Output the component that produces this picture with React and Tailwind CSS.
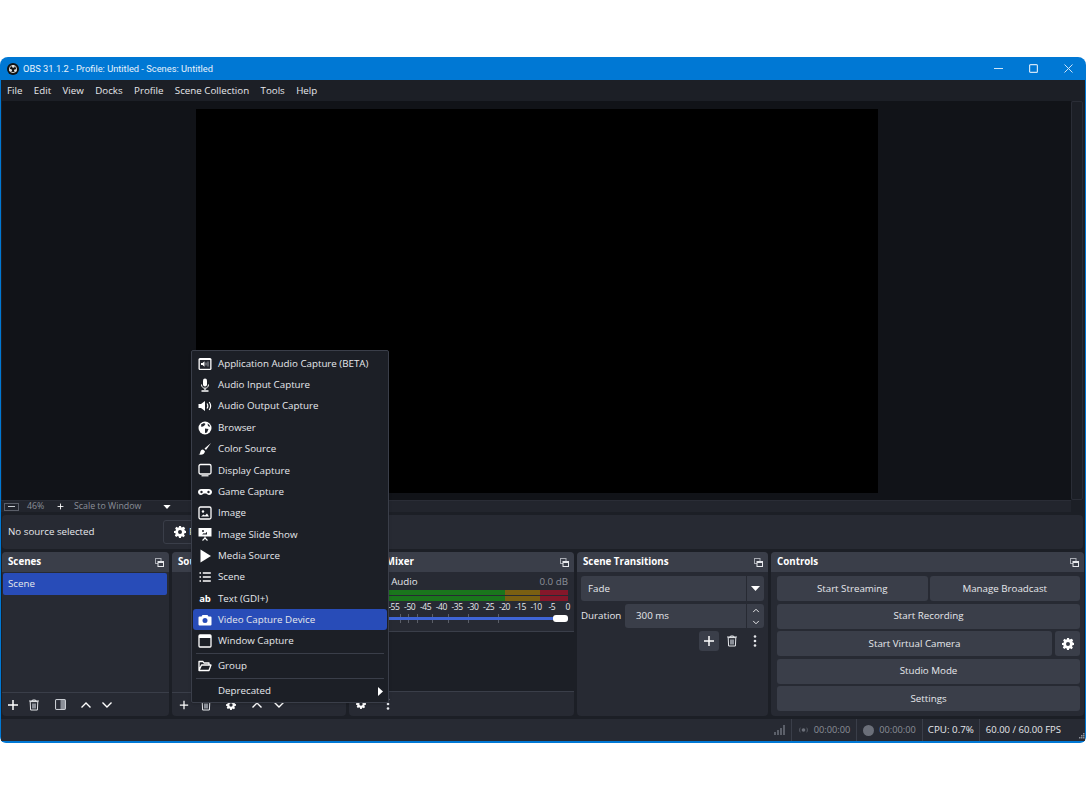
const Plus = ({ className = 'w-3 h-3' }) => (
  <svg viewBox="0 0 12 12" className={`shrink-0 ${className}`}>
    <path d="M6 1v10M1 6h10" stroke="#fff" strokeWidth="1.5" fill="none" />
  </svg>
);

const Trash = () => (
  <svg viewBox="0 0 12 12" className="w-3 h-3 shrink-0">
    <path d="M1 2h10M4 2l.5-1h3L8 2M2.200 2.600l.4 8.400h6.800l.4-8.400z" stroke="#e5e7eb" strokeWidth="1" fill="none" />
    <rect x="4" y="4.500" width="4" height="5" fill="#8b8f98" />
  </svg>
);

const Gear = ({ className = 'w-3 h-3' }) => (
  <svg viewBox="0 0 12 12" className={`shrink-0 ${className}`}>
    <path
      fillRule="evenodd"
      fill="#fff"
      d="M5 0h2l.3 1.600 1-.4L9.700 .8l1.500 1.500-.9 1.300.5 1 1.200.4v2l-1.600.3-.4 1 .9 1.400-1.500 1.500-1.300-.9-1 .5L7 12H5l-.3-1.600-1-.4-1.400.9L.8 9.400l.9-1.300-.5-1L0 7V5l1.600-.3.4-1-.9-1.400L2.600 .8l1.300 .9 1-.5zM6 4a2 2 0 1 0 0 4 2 2 0 0 0 0-4z"
    />
  </svg>
);

const Dots = () => (
  <svg viewBox="0 0 4 12" className="w-1 h-3 shrink-0" fill="#e5e7eb">
    <circle cx="2" cy="1.500" r="1.300" />
    <circle cx="2" cy="6" r="1.300" />
    <circle cx="2" cy="10.500" r="1.300" />
  </svg>
);

const Chevron = ({ up, className = 'w-3 h-2' }) => (
  <svg viewBox="0 0 12 8" className={`shrink-0 ${className}`}>
    <path d={up ? 'M1.500 6.500L6 2l4.500 4.500' : 'M1.500 1.500L6 6l4.500-4.500'} stroke="#fff" strokeWidth="1.400" fill="none" />
  </svg>
);

const Float = () => (
  <svg viewBox="0 0 9 9" className="w-[9px] h-[9px]">
    <rect x=".5" y=".5" width="5.500" height="5" fill="none" stroke="#a8abb3" />
    <rect x="3" y="3.500" width="5.500" height="5" fill="#3a3e49" stroke="#e5e7eb" />
    <rect x="3" y="3.500" width="5.500" height="1.500" fill="#e5e7eb" />
  </svg>
);

const Caret = ({ className = 'w-[9px] h-[5px]' }) => (
  <svg viewBox="0 0 9 5" className={className}>
    <path d="M0 0h9L4.500 5z" fill="#fff" />
  </svg>
);

const iconPaths = {
  appAudio: (
    <>
      <rect x=".5" y="1" width="13" height="12" rx="1.500" fill="#fff" />
      <rect x="1.800" y="3" width="10.400" height="8.800" fill="#22252d" />
      <path d="M3 6h1.500l2-1.700v5.400l-2-1.700H3z" fill="#fff" />
      <path d="M8 5.500v3M10 4.500v5" stroke="#9ca0a8" strokeWidth="1" />
    </>
  ),
  mic: (
    <>
      <rect x="5" y=".5" width="4" height="8" rx="2" fill="#fff" />
      <path d="M3.500 6.500c0 5 7 5 7 0" stroke="#fff" fill="none" />
      <path d="M7 10.500V12M3.500 13h7" stroke="#fff" strokeWidth="1.300" />
    </>
  ),
  speaker: (
    <>
      <path d="M.5 5h2.500L7 2v10L3 9H.5z" fill="#fff" />
      <path d="M9 4.500c1 1.500 1 3.500 0 5M11.200 3c1.800 2.500 1.800 5.500 0 8" stroke="#fff" strokeWidth="1.200" fill="none" />
    </>
  ),
  globe: (
    <>
      <circle cx="7" cy="7" r="6.500" fill="#fff" />
      <path d="M3 3.500l3-1.500 1.500 1-1.500 2-2.500 1zM7 7.500l3.500.5-1.500 3.500-2 .5zM9.500 2.500l2 1.500.5 2-2-1z" fill="#22252d" />
    </>
  ),
  brush: (
    <>
      <path d="M13 1L6.500 6.500l1.500 1.500z" fill="#fff" />
      <path d="M5 7.500c-2 0-2.500 1.500-2.800 3-.1 1-.7 1.500-1.700 1.800 2.500 1 6 .5 6.500-3z" fill="#fff" />
    </>
  ),
  monitor: (
    <>
      <rect x="1" y="1.500" width="12" height="9.500" rx="1.500" fill="none" stroke="#fff" strokeWidth="1.300" />
      <path d="M3.500 12.800h7" stroke="#fff" strokeWidth="1.200" />
    </>
  ),
  gamepad: (
    <path
      fillRule="evenodd"
      fill="#fff"
      d="M3.500 4h7C13 4 14 5.500 14 7s-1 3-3 3c-1.500 0-2-1.500-3-1.500H6C5 8.500 4.500 10 3 10 1 10 0 8.500 0 7s1-3 3.500-3zM3.500 5.800a1.200 1.200 0 1 0 0 2.400 1.200 1.200 0 0 0 0-2.400zM10.500 5.800a1.200 1.200 0 1 0 0 2.400 1.200 1.200 0 0 0 0-2.400z"
    />
  ),
  image: (
    <>
      <rect x="1" y="1" width="12" height="12" rx="1.500" fill="none" stroke="#fff" strokeWidth="1.300" />
      <circle cx="5" cy="5.500" r="1.200" fill="#fff" />
      <path d="M3 10.500l2.500-2 1.500 1 2-2 2 3z" fill="#fff" />
    </>
  ),
  slides: (
    <>
      <rect x=".5" y="1" width="13" height="8.500" fill="#fff" />
      <circle cx="5" cy="4" r="1" fill="#22252d" />
      <path d="M4 7.500l2-1.500 1 .7 2-2v2.800z" fill="#22252d" />
      <path d="M7 9.500v1.500M7 11l-2.500 2.500M7 11l2.500 2.500" stroke="#fff" strokeWidth="1.100" />
    </>
  ),
  play: <path d="M2.500 .5L13 7 2.500 13.500z" fill="#fff" />,
  list: (
    <path
      d="M1.500 3h1.500M1.500 7h1.500M1.500 11h1.500M4.800 3h8M4.800 7h8M4.800 11h8"
      stroke="#fff"
      strokeWidth="1.300"
    />
  ),
  camera: (
    <path
      fillRule="evenodd"
      fill="#fff"
      d="M4.500 2h5l1 1.500H12.500a1 1 0 0 1 1 1V11.500a1 1 0 0 1-1 1h-11a1 1 0 0 1-1-1V4.500a1 1 0 0 1 1-1H3.500zM7 5a2.500 2.500 0 1 0 0 5 2.500 2.500 0 0 0 0-5z"
    />
  ),
  window: (
    <>
      <rect x="1" y="1" width="12" height="12" rx="1" fill="none" stroke="#fff" strokeWidth="1.300" />
      <rect x="1" y="1" width="12" height="3" fill="#fff" />
    </>
  ),
  folder: (
    <path
      d="M1 11.500V2.500h4l1 1.500h5v2M1 11.500h10l2-5.500H3.500z"
      stroke="#fff"
      strokeWidth="1.300"
      strokeLinejoin="round"
      fill="none"
    />
  ),
};

const MenuIcon = ({ name }) => (
  <svg viewBox="0 0 14 14" className="w-[14px] h-[14px]">
    {iconPaths[name]}
  </svg>
);

const sourceTypes = [
  { label: 'Application Audio Capture (BETA)', icon: 'appAudio' },
  { label: 'Audio Input Capture', icon: 'mic' },
  { label: 'Audio Output Capture', icon: 'speaker' },
  { label: 'Browser', icon: 'globe' },
  { label: 'Color Source', icon: 'brush' },
  { label: 'Display Capture', icon: 'monitor' },
  { label: 'Game Capture', icon: 'gamepad' },
  { label: 'Image', icon: 'image' },
  { label: 'Image Slide Show', icon: 'slides' },
  { label: 'Media Source', icon: 'play' },
  { label: 'Scene', icon: 'list' },
  { label: 'Text (GDI+)', text: 'ab' },
  { label: 'Video Capture Device', icon: 'camera', active: true },
  { label: 'Window Capture', icon: 'window' },
];

const AddMenu = () => (
  <div className="absolute left-[191px] top-[350px] w-[198px] h-[353px] bg-[#1c1f26] border border-[#3a3e49] rounded-[2px] p-px pt-[2px] z-10 shadow">
    {sourceTypes.map((item) => (
      <div
        key={item.label}
        className={`h-[21.350px] flex items-center rounded-[3px] text-[#e6e8ec] ${item.active ? 'bg-[#284cb8]' : ''}`}
      >
        <span className="w-[25px] pl-[5px] flex shrink-0">
          {item.text ? (
            <span className="w-[14px] text-[9.500px] font-bold text-white text-center">{item.text}</span>
          ) : (
            <MenuIcon name={item.icon} />
          )}
        </span>
        <span>{item.label}</span>
      </div>
    ))}
    <div className="h-px bg-[#3a3e49] mx-[3px] mt-[1px]" />
    <div className="h-[24.500px] flex items-center text-[#e6e8ec]">
      <span className="w-[25px] pl-[5px] flex shrink-0">
        <MenuIcon name="folder" />
      </span>
      <span>Group</span>
    </div>
    <div className="h-px bg-[#3a3e49] mx-[3px]" />
    <div className="h-[24px] flex items-center justify-between text-[#e6e8ec] pr-[4px]">
      <span className="pl-[25px]">Deprecated</span>
      <svg viewBox="0 0 5 9" className="w-[5px] h-[9px]">
        <path d="M0 0l5 4.500L0 9z" fill="#fff" />
      </svg>
    </div>
  </div>
);

const Dock = ({ title, className = '', children }) => (
  <div className={`flex flex-col h-[164px] bg-[#272a33] rounded-[4px] overflow-hidden ${className}`}>
    <div className="h-[20px] shrink-0 bg-[#3a3e49] flex items-center justify-between pl-[6px] pr-[5px]">
      <span className="font-bold text-white">{title}</span>
      <Float />
    </div>
    {children}
  </div>
);

const Btn = ({ children, className = '' }) => (
  <div className={`h-[25px] bg-[#3a3e49] rounded-[3px] flex items-center justify-center text-[#e6e8ec] ${className}`}>
    {children}
  </div>
);

const dbLabels = ['-55', '-50', '-45', '-40', '-35', '-30', '-25', '-20', '-15', '-10', '-5', '0'];
const sliderTicks = [15, 23, 32, 47, 63, 83, 113];

const AudioMixer = () => (
  <Dock title="Audio Mixer" className="w-[225px]">
    <div className="flex-1 flex flex-col min-h-0">
      <div className="h-[59px] shrink-0 pl-[2px] pr-[6px] pt-[2px]">
        <div className="flex justify-between h-[15px] items-center">
          <span className="text-[#e6e8ec]">Desktop Audio</span>
          <span className="text-[#8b8f98]">0.0 dB</span>
        </div>
        <div className="flex flex-col gap-px mt-[1px]">
          {[0, 1].map((i) => (
            <div key={i} className="h-[5px] flex">
              <div className="flex-[154] bg-[#1a761c]" />
              <div className="flex-[35] bg-[#7a5f12]" />
              <div className="flex-[28] bg-[#85172a]" />
            </div>
          ))}
        </div>
        <div className="flex text-[8.500px] leading-[10px] tracking-tighter text-[#e6e8ec] mt-[1px] pl-[35px]">
          {dbLabels.map((l) => (
            <span key={l} className="w-[15.800px] text-center shrink-0">
              {l}
            </span>
          ))}
        </div>
        <div className="relative h-[9px] mt-[2px] ml-[34px]">
          {sliderTicks.map((left) => (
            <span key={left} className="absolute top-0 w-px h-[9px] bg-[#5b5f69]" style={{ left }} />
          ))}
          <div className="absolute left-0 right-0 top-[3px] h-[3px] bg-[#3f65d6] rounded-full" />
          <div className="absolute right-0 top-[1px] w-[15px] h-[7px] bg-white rounded-[3px]" />
        </div>
      </div>
      <div className="flex-1 bg-[#1c1f26] border-y border-[#3a3e49]" />
    </div>
    <div className="h-[24px] shrink-0 flex items-center gap-[20px] pl-[7px]">
      <Gear className="w-[10px] h-[10px]" />
      <Dots />
    </div>
  </Dock>
);

const App = () => (
  <div
    className="relative h-[800px] bg-white pt-[57px] text-[9.750px] leading-none overflow-hidden"
    style={{ fontFamily: '"Open Sans", "Noto Sans", sans-serif' }}
  >
    <div className="h-[686px] rounded-t-[8px] rounded-b-[6px] bg-[#0078d4] px-[1px] pb-[2px] flex flex-col overflow-hidden">
      <div className="h-[23px] shrink-0 flex items-center justify-between text-[#e8f2fb] pl-[6px]">
        <div className="flex items-center gap-[4px]">
          <svg viewBox="0 0 12 12" className="w-3 h-3">
            <circle cx="6" cy="6" r="6" fill="#111" />
            <circle cx="6" cy="6" r="3.600" fill="none" stroke="#cfcfcf" strokeWidth="1" />
            <circle cx="6.300" cy="3.400" r="1.300" fill="#e5e5e5" />
            <circle cx="3.600" cy="7.300" r="1.300" fill="#e5e5e5" />
            <circle cx="8.400" cy="7.500" r="1.300" fill="#e5e5e5" />
          </svg>
          <span className="font-['Roboto'] text-[9.300px]">OBS 31.1.2 - Profile: Untitled - Scenes: Untitled</span>
        </div>
        <div className="flex items-center gap-[26px] pr-[12px]">
          <svg viewBox="0 0 9 9" className="w-[9px] h-[9px]">
            <path d="M0 4.500h9" stroke="#cfe4f7" />
          </svg>
          <svg viewBox="0 0 9 9" className="w-[9px] h-[9px]">
            <rect x=".6" y=".6" width="7.800" height="7.800" rx="1" fill="none" stroke="#cfe4f7" strokeWidth="1.200" />
          </svg>
          <svg viewBox="0 0 9 9" className="w-[9px] h-[9px]">
            <path d="M.5 .5l8 8M8.500 .5l-8 8" stroke="#cfe4f7" />
          </svg>
        </div>
      </div>

      <div className="flex-1 min-h-0 flex flex-col bg-[#1c1f26]">
        <div className="h-[21px] shrink-0 flex items-center gap-[11.400px] pl-[6px] text-[#e6e8ec]">
          {['File', 'Edit', 'View', 'Docks', 'Profile', 'Scene Collection', 'Tools', 'Help'].map((m) => (
            <span key={m}>{m}</span>
          ))}
        </div>

        <div className="h-[399px] shrink-0 flex">
          <div className="flex-1 ml-[1px] bg-[#111318] flex items-center justify-center">
            <div className="w-[682px] h-[384px] bg-black" />
          </div>
          <div className="w-[12px] mr-[2px] bg-[#1c1f26] border border-[#2a2d36] rounded-[2px]" />
        </div>

        <div className="h-[12px] shrink-0 mr-[14px] flex items-center text-[#8b8f98] text-[8.800px] bg-[#22252d] border-t border-[#2a2d36]">
          <span className="ml-[3px] w-[15px] h-[8px] border border-[#5b5f69] flex items-center justify-center">
            <span className="w-[7px] h-px bg-[#c9ccd2]" />
          </span>
          <span className="ml-[8px] w-[20px]">46%</span>
          <span className="ml-[10px]">
            <Plus className="w-[7px] h-[7px]" />
          </span>
          <span className="ml-[10px] w-[67px] whitespace-nowrap">Scale to Window</span>
          <span className="ml-[22px]">
            <Caret className="w-[8px] h-[4px]" />
          </span>
        </div>

        <div className="h-[3px] shrink-0" />

        <div className="h-[34px] shrink-0 mx-[1px] mr-[2px] rounded-[4px] flex items-center pl-[6px] text-[#e6e8ec] bg-[#272a33]">
          <span className="w-[155px] shrink-0">No source selected</span>
          <div className="w-[80px] h-[24px] rounded-[3px] border border-[#3a3e49] flex items-center gap-[3px] pl-[10px]">
            <Gear />
            <span>Properties</span>
          </div>
        </div>

        <div className="h-[3px] shrink-0" />

        <div className="flex gap-[3px] px-[1px] shrink-0">
          <Dock title="Scenes" className="w-[167px]">
            <div className="flex-1 p-[1px] pr-[2px]">
              <div className="h-[22px] bg-[#284cb8] rounded-[2px] flex items-center pl-[5px] text-[#e6e8ec]">
                Scene
              </div>
            </div>
            <div className="h-[24px] shrink-0 flex items-center pl-[5px] border-t border-[#3a3e49]">
              <Plus />
              <span className="w-[9px]" />
              <Trash />
              <span className="w-[14.500px]" />
              <svg viewBox="0 0 10 10" className="w-[11px] h-[11px]">
                <rect x=".5" y=".5" width="9" height="9" rx="1" fill="#8b8f98" stroke="#c9ccd2" />
                <rect x="1" y="1" width="4" height="8" fill="#2b2e38" />
              </svg>
              <span className="w-[14.500px]" />
              <Chevron up />
              <span className="w-[9px]" />
              <Chevron />
            </div>
          </Dock>

          <Dock title="Sources" className="w-[174px]">
            <div className="flex-1" />
            <div className="h-[24px] shrink-0 flex items-center pl-[7px] border-t border-[#3a3e49]">
              <Plus className="w-[10px] h-[10px]" />
              <span className="w-[11px]" />
              <Trash />
              <span className="w-[14px]" />
              <Gear className="w-[10px] h-[10px]" />
              <span className="w-[15px]" />
              <Chevron up />
              <span className="w-[10px]" />
              <Chevron />
            </div>
          </Dock>

          <AudioMixer />

          <Dock title="Scene Transitions" className="w-[191px]">
            <div className="flex-1 flex flex-col gap-[3px] px-[4px] pt-[4px]">
              <div className="h-[25px] bg-[#3a3e49] rounded-[3px] flex items-center justify-between text-[#e6e8ec]">
                <span className="pl-[7px]">Fade</span>
                <span className="w-[18px] h-full border-l border-[#272a33] flex items-center justify-center">
                  <Caret />
                </span>
              </div>
              <div className="flex items-center h-[24px] text-[#e6e8ec]">
                <span className="w-[44px] shrink-0">Duration</span>
                <div className="flex-1 h-full bg-[#3a3e49] rounded-[3px] flex items-center justify-between">
                  <span className="pl-[11px]">300 ms</span>
                  <span className="w-[18px] h-full border-l border-[#272a33] flex flex-col items-center justify-around">
                    <Chevron up className="w-[8px] h-[5px]" />
                    <Chevron className="w-[8px] h-[5px]" />
                  </span>
                </div>
              </div>
              <div className="flex items-center justify-end pr-[7px]">
                <span className="w-[20px] h-[20px] rounded-[3px] bg-[#3a3e49] flex items-center justify-center">
                  <Plus />
                </span>
                <span className="w-[7px]" />
                <Trash />
                <span className="w-[15px]" />
                <Dots />
              </div>
            </div>
          </Dock>

          <Dock title="Controls" className="w-[313px]">
            <div className="flex-1 flex flex-col gap-[2.500px] px-[6px] pt-[4px] pr-[4px]">
              <div className="flex gap-[2px]">
                <Btn className="flex-1">Start Streaming</Btn>
                <Btn className="flex-1">Manage Broadcast</Btn>
              </div>
              <Btn>Start Recording</Btn>
              <div className="flex gap-[3px]">
                <Btn className="flex-1">Start Virtual Camera</Btn>
                <Btn className="w-[25px]">
                  <Gear />
                </Btn>
              </div>
              <Btn>Studio Mode</Btn>
              <Btn>Settings</Btn>
            </div>
          </Dock>
        </div>

        <div className="flex-1 mt-[2px] flex items-center justify-end bg-[#272a33] border-t border-[#1c1f26] text-[#e6e8ec]">
          <span className="h-full flex items-center pl-[6px] pr-[5px] border-r border-[#3a3e49]">
            <svg viewBox="0 0 12 10" className="w-[12px] h-[10px]" fill="#5b5f69">
              <rect x="0" y="7" width="2" height="3" />
              <rect x="3" y="5" width="2" height="5" />
              <rect x="6" y="3" width="2" height="7" />
              <rect x="9" y="0" width="2" height="10" />
            </svg>
          </span>
          <span className="h-full flex items-center gap-[5px] px-[6px] border-r border-[#3a3e49] text-[#8b8f98] text-[9.250px]">
            <svg viewBox="0 0 12 8" className="w-[11px] h-[8px]">
              <circle cx="6" cy="4" r="2" fill="#6b6f79" />
              <path d="M2.500 1.500c-1 1.500-1 3.500 0 5M9.500 1.500c1 1.500 1 3.500 0 5" stroke="#5b5f69" fill="none" />
            </svg>
            00:00:00
          </span>
          <span className="h-full flex items-center gap-[5px] px-[6px] border-r border-[#3a3e49] text-[#8b8f98] text-[9.250px]">
            <span className="w-[11px] h-[11px] rounded-full bg-[#6b6f79]" />
            00:00:00
          </span>
          <span className="h-full flex items-center px-[5px] border-r border-[#3a3e49]">CPU: 0.7%</span>
          <span className="h-full flex items-center pl-[6px] pr-[18px] text-[9.500px]">60.00 / 60.00 FPS</span>
          <svg viewBox="0 0 6 6" className="w-[6px] h-[6px] self-end mb-[2px]" fill="#8b8f98">
            <rect x="4" y="0" width="1.500" height="1.500" />
            <rect x="2" y="2" width="1.500" height="1.500" />
            <rect x="4" y="2" width="1.500" height="1.500" />
            <rect x="0" y="4" width="1.500" height="1.500" />
            <rect x="2" y="4" width="1.500" height="1.500" />
            <rect x="4" y="4" width="1.500" height="1.500" />
          </svg>
        </div>
      </div>
    </div>
    <AddMenu />
  </div>
);

export default App;
